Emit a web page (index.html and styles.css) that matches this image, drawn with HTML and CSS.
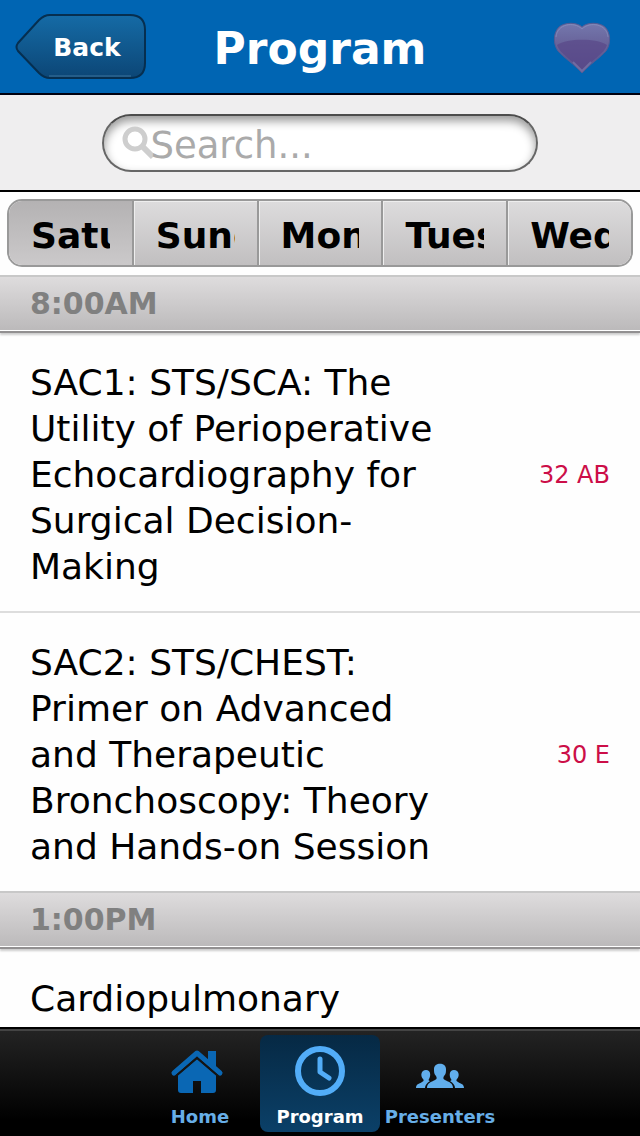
FILE: index.html
```
<!DOCTYPE html>
<html lang="en">
<head>
  <meta charset="UTF-8" />
  <meta name="viewport" content="width=device-width, initial-scale=1" />
  <title>Program</title>
  <link rel="stylesheet" href="styles.css">
</head>
<body>
  <header class="toolbar">
    <button class="back" type="button">
      <svg class="back-shape" viewBox="0 0 132 66" aria-hidden="true">
        <defs>
          <linearGradient id="backFill" x1="0" y1="0" x2="0" y2="1">
            <stop offset="0" stop-color="#156ba6" />
            <stop offset="1" stop-color="#0c4676" />
          </linearGradient>
        </defs>
        <path d="M35 1H115Q130 1 130 16V49Q130 64 115 64H35Q29 64 24 59L3 37Q0 33 3 29L24 6Q29 1 35 1Z" fill="url(#backFill)" stroke="#062f50" stroke-width="2" />
        <path d="M34 62H116" stroke="#3c749c" stroke-width="1" />
      </svg>
      <span>Back</span>
    </button>
    <h1>Program</h1>
    <button class="favorite" type="button" aria-label="Favorites">
      <svg viewBox="0 0 58 52" aria-hidden="true">
        <defs>
          <linearGradient id="heartFill" x1="0" y1="0" x2="0" y2="1">
            <stop offset="0" stop-color="#7478ad" />
            <stop offset="0.4" stop-color="#69649b" />
            <stop offset="1" stop-color="#59528e" />
          </linearGradient>
        </defs>
        <path d="M29 5C24 0 12 0 6 5C0 11 0 22 5 29C10 35 22 43 29 51C36 43 48 35 53 29C58 22 58 11 52 5C46 0 34 0 29 5Z" fill="url(#heartFill)" stroke="#555b93" stroke-width="1" />
        <path d="M4 23C14 16 44 16 54 23C52 31 37 40 29 48C21 40 6 31 4 23Z" fill="#564386" opacity="0.6" />
        <path d="M3 15C4 2 21-1 29 7C37-1 54 2 55 15" fill="none" stroke="#8d98c1" stroke-width="1" opacity="0.6" />
        <path d="M20 40L29 49L38 40" fill="none" stroke="#8585b5" stroke-width="2" opacity="0.5" />
      </svg>
    </button>
  </header>

  <div class="search-bar">
    <label class="search">
      <svg viewBox="0 0 34 34" aria-hidden="true">
        <circle cx="13" cy="13" r="10" fill="none" stroke="#cecece" stroke-width="5" />
        <path d="M20 20L31 31" stroke="#cecece" stroke-width="6" />
      </svg>
      <input type="search" placeholder="Search..." aria-label="Search" />
    </label>
  </div>

  <main class="content">
    <div class="days">
      <button class="active" type="button"><span>Saturday</span></button>
      <button type="button"><span>Sunday</span></button>
      <button type="button"><span>Monday</span></button>
      <button type="button"><span>Tuesday</span></button>
      <button type="button"><span>Wednesday</span></button>
    </div>

    <h2 class="time">8:00AM</h2>
    <ul class="sessions">
      <li>
        <span class="name">SAC1: STS/SCA: The Utility of Perioperative Echocardiography for Surgical Decision-Making</span>
        <span class="room">32 AB</span>
      </li>
      <li>
        <span class="name">SAC2: STS/CHEST: Primer on Advanced and Therapeutic Bronchoscopy: Theory and Hands-on Session</span>
        <span class="room">30 E</span>
      </li>
    </ul>

    <h2 class="time">1:00PM</h2>
    <ul class="sessions">
      <li>
        <span class="name">Cardiopulmonary</span>
      </li>
    </ul>
  </main>

  <nav class="tabs">
    <a href="#home">
      <svg viewBox="0 0 52 52" aria-hidden="true">
        <path d="M0 28L23 8L46 28" fill="none" stroke="#0a67b4" stroke-width="5" stroke-linecap="round" stroke-linejoin="round" />
        <path d="M34 6H42V25L34 18Z" fill="#0a67b4" />
        <path d="M4 30L23 14L42 30V45Q42 48 39 48H27V36H19V48H7Q4 48 4 45Z" fill="#0a67b4" />
        <path d="M2 31L23 13L44 31" fill="none" stroke="#141414" stroke-width="2" />
      </svg>
      Home
    </a>
    <a class="active" href="#program">
      <svg viewBox="0 0 52 52" aria-hidden="true">
        <circle cx="26" cy="26" r="22" fill="none" stroke="#52adf8" stroke-width="6" />
        <path d="M26 14V27L35 33" fill="none" stroke="#52adf8" stroke-width="5" stroke-linecap="round" stroke-linejoin="round" />
      </svg>
      Program
    </a>
    <a href="#presenters">
      <svg viewBox="0 0 52 52" aria-hidden="true">
        <path d="M13 43C13 38 17 37 21 35C23 34 23 33 22 31C20 29 20 27 20 24C20 17 32 17 32 24C32 27 32 29 30 31C29 33 29 34 31 35C35 37 39 38 39 43Z" fill="#61aeec" />
        <path d="M2 43C2 39 5 39 8 37C10 36 10 35 9 34C6 31 7 25 12 25C17 25 17 31 15 34C14 35 15 36 16 36C13 38 11 40 11 43Z" fill="#61aeec" />
        <path d="M50 43C50 39 47 39 44 37C42 36 42 35 43 34C46 31 45 25 40 25C35 25 35 31 37 34C38 35 37 36 36 36C39 38 41 40 41 43Z" fill="#61aeec" />
      </svg>
      Presenters
    </a>
  </nav>
</body>
</html>
```
FILE: styles.css
```
* {
  box-sizing: border-box;
}
body {
  margin: 0;
  height: 100vh;
  display: flex;
  flex-direction: column;
  font-family: "DejaVu Sans", Verdana, sans-serif;
  background: #fefefe;
  color: #000;
}
button {
  font-family: inherit;
  padding: 0;
  border: none;
  background: none;
  cursor: pointer;
}
.toolbar {
  display: grid;
  grid-template-columns: 1fr auto 1fr;
  align-items: center;
  height: 95px;
  padding: 0 15px;
  background: #0065b3;
  border-bottom: 2px solid #000010;
  color: #fff;
}
.toolbar h1 {
  margin: 4px 0 0;
  font-size: 44px;
  line-height: 50px;
}
.back {
  display: grid;
  align-items: center;
  width: 132px;
  color: #fff;
  font-size: 25px;
  font-weight: bold;
}
.back > * {
  grid-area: 1 / 1;
}
.back span {
  padding: 2px 0 0 12px;
}
.back-shape {
  width: 132px;
  height: 66px;
}
.favorite {
  justify-self: end;
  padding: 2px 14px 0 0;
}
.favorite svg {
  display: block;
  width: 58px;
  height: 52px;
}
.search-bar {
  display: flex;
  justify-content: center;
  padding: 19px 0 18px;
  background: #efeeef;
  border-bottom: 2px solid #000;
}
.search {
  display: flex;
  align-items: center;
  width: 68%;
  height: 58px;
  padding: 0 18px;
  border: 2px solid #666;
  border-top-color: #4c4c4c;
  border-radius: 29px;
  background: #fff;
  box-shadow: inset 0 5px 10px #999;
}
.search svg {
  flex: none;
  width: 34px;
  height: 34px;
  margin-right: -6px;
}
.search input {
  flex: 1;
  min-width: 0;
  padding: 4px 0 0;
  border: none;
  outline: none;
  background: none;
  font-family: inherit;
  font-size: 37px;
}
.search input::placeholder {
  color: #aaa;
}
.content {
  flex: 1;
  min-height: 0;
  overflow-y: auto;
  scrollbar-width: none;
}
.days {
  display: flex;
  height: 68px;
  margin: 7px 7px 8px;
  border: 2px solid #999;
  border-radius: 15px;
  overflow: hidden;
}
.days button {
  flex: 1;
  min-width: 0;
  padding: 4px 22px 0;
  background: linear-gradient(#dddcdd, #c1bfc0);
  box-shadow: inset 1px 1px #eee;
  font-size: 36px;
  font-weight: bold;
  text-align: left;
}
.days button + button {
  border-left: 2px solid #999;
}
.days .active {
  background: linear-gradient(#b4b2b3, #cbc9ca);
  box-shadow: none;
}
.days span {
  display: block;
  overflow: hidden;
}
.time {
  margin: 0;
  height: 58px;
  padding: 0 30px;
  border-top: 2px solid #c8c8c8;
  border-bottom: 2px solid #929091;
  background: linear-gradient(#dedcdd, #bbb9ba);
  box-shadow: inset 0 -1px #fff, 0 2px 2px #ccc;
  color: #808080;
  font-size: 30px;
  line-height: 54px;
}
.sessions {
  margin: 0;
  padding: 0;
  list-style: none;
}
.sessions li {
  display: flex;
  align-items: center;
  justify-content: space-between;
  padding: 27px 30px 21px;
}
.sessions li + li {
  border-top: 2px solid #ddd;
}
.name {
  width: 71%;
  font-size: 36px;
  line-height: 46px;
}
.room {
  color: #cc0e48;
  font-size: 24px;
}
.tabs {
  display: flex;
  justify-content: center;
  height: 109px;
  padding: 6px 0 4px;
  border-top: 2px solid #000;
  background: linear-gradient(#242424, #000 85%);
  box-shadow: inset 0 2px #444;
}
.tabs a {
  display: flex;
  flex-direction: column;
  align-items: center;
  width: 120px;
  padding-top: 10px;
  border-radius: 8px;
  color: #67aee7;
  font-size: 18px;
  font-weight: bold;
  line-height: 24px;
  text-decoration: none;
}
.tabs .active {
  background: linear-gradient(#062944, #0b4068);
  color: #fff;
}
.tabs svg {
  width: 52px;
  height: 52px;
  margin-bottom: 8px;
  overflow: visible;
}
```
